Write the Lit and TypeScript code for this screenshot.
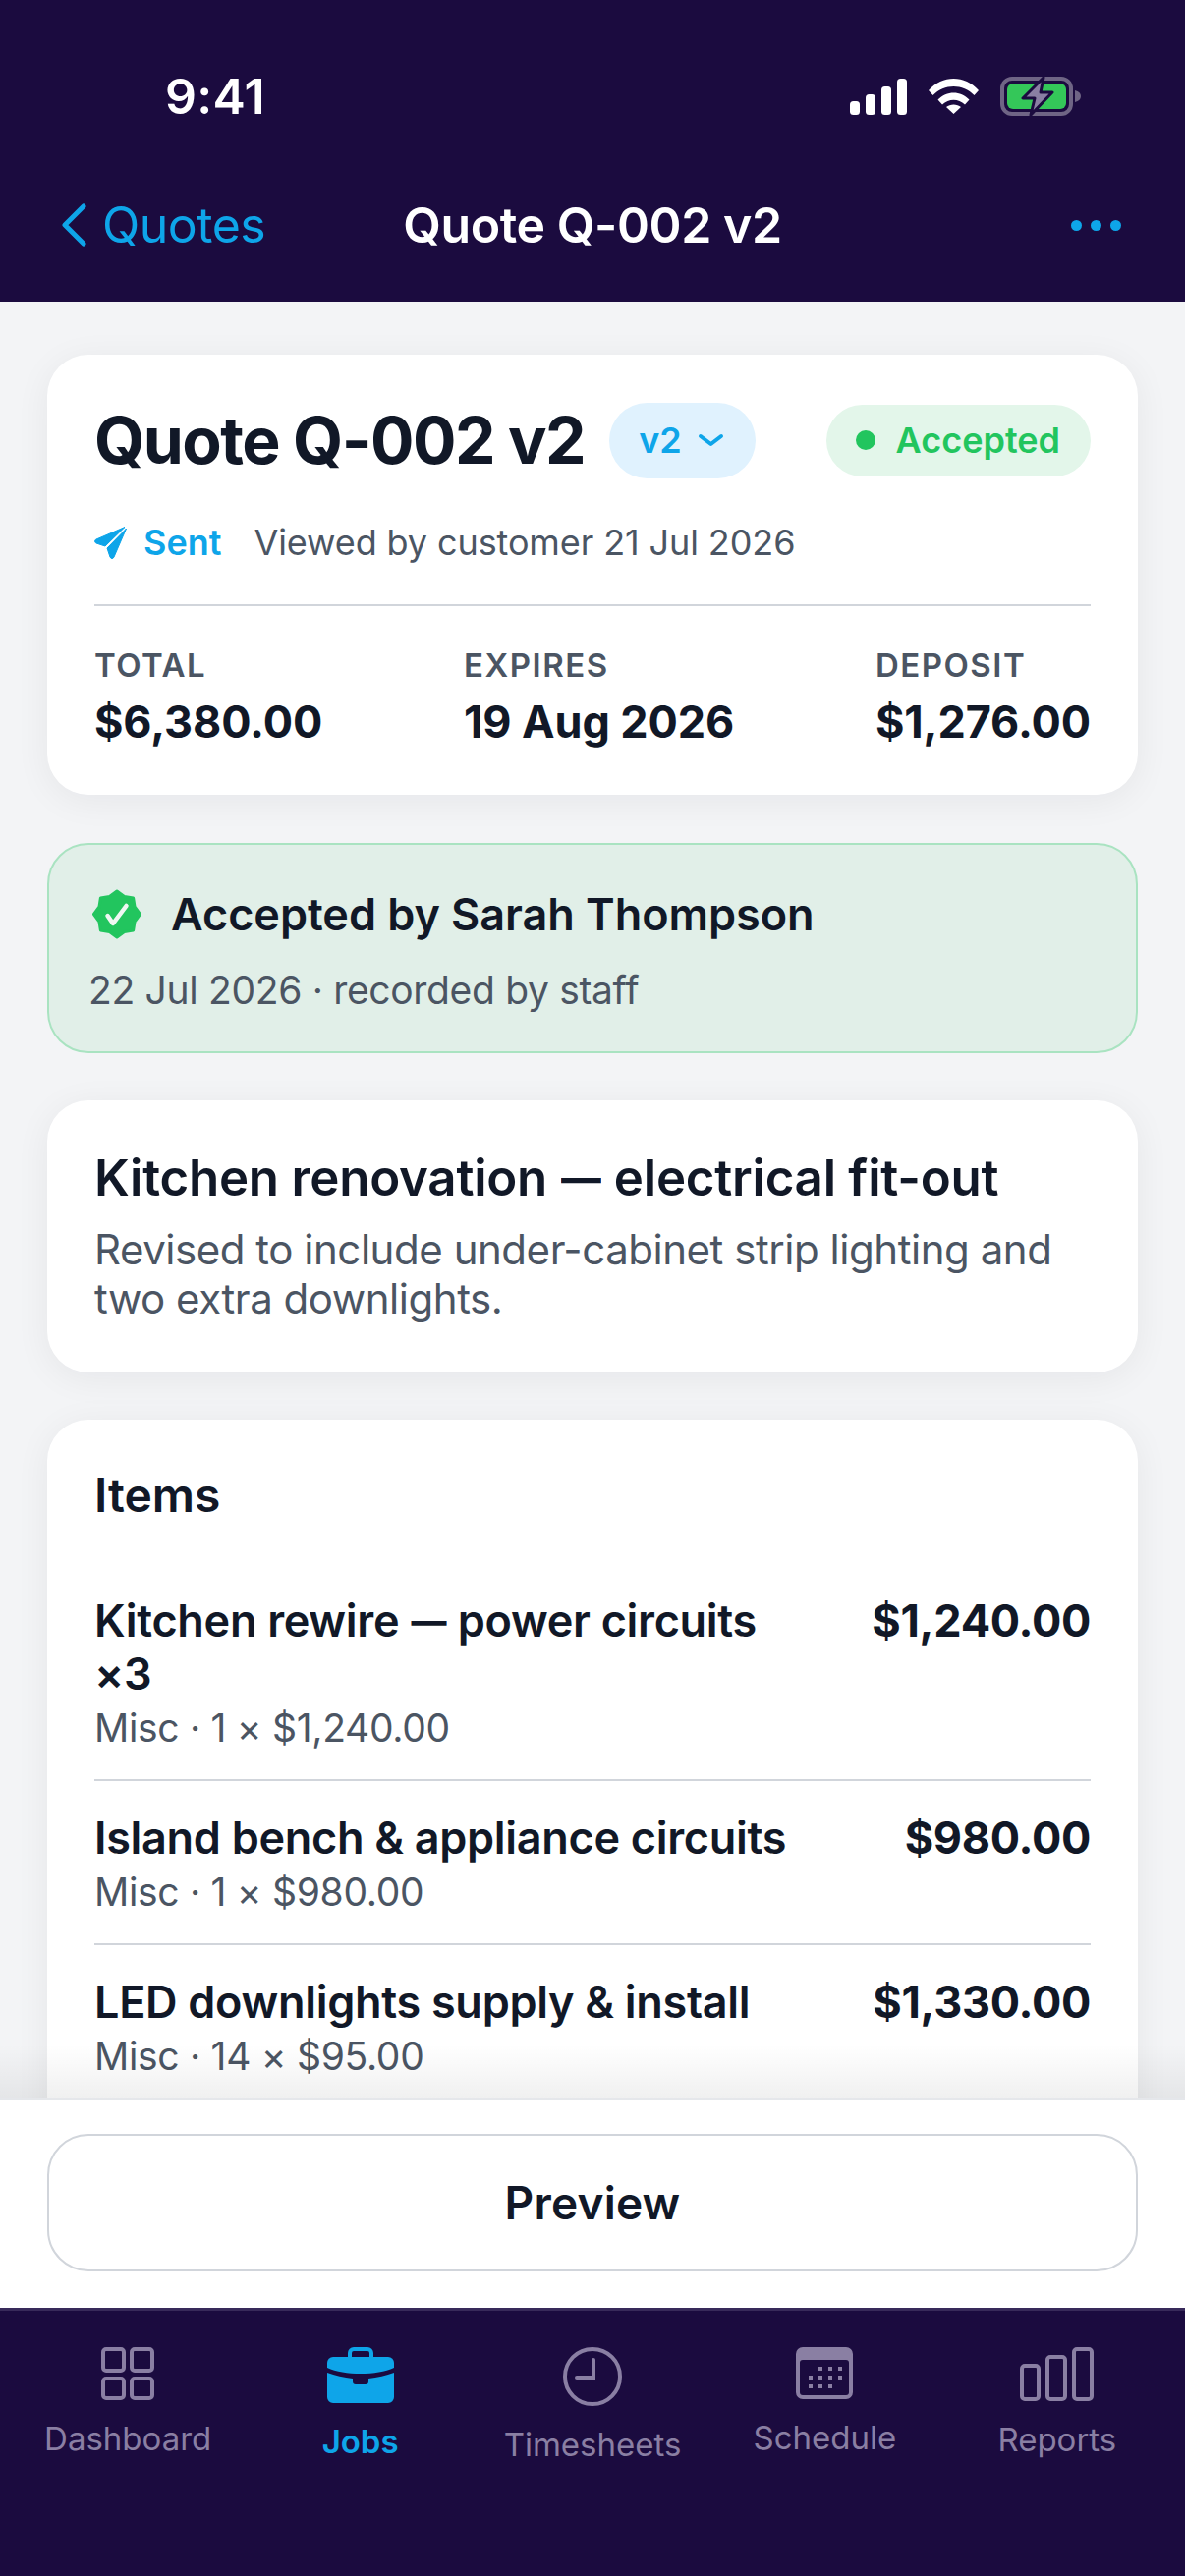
import { LitElement, css, html, svg } from 'lit'
import { customElement } from 'lit/decorators.js'

const dash = html`<span class="dash-gap"> <span class="dash">—</span> </span>`

const items = [
  { name: html`Kitchen rewire${dash}power circuits <span>×3</span>`, meta: 'Misc · 1 × $1,240.00', price: '$1,240.00' },
  { name: 'Island bench & appliance circuits', meta: 'Misc · 1 × $980.00', price: '$980.00' },
  { name: 'LED downlights supply & install', meta: 'Misc · 14 × $95.00', price: '$1,330.00' },
]

const icons = {
  dashboard: html`<svg width="54" height="54" viewBox="0 0 54 54" fill="none" stroke="currentColor" stroke-width="4">
    <rect x="2" y="2" width="21" height="22" rx="3"/><rect x="31" y="2" width="21" height="22" rx="3"/>
    <rect x="2" y="32" width="21" height="20" rx="3"/><rect x="31" y="32" width="21" height="20" rx="3"/>
  </svg>`,
  jobs: html`<svg width="68" height="57" viewBox="0 0 68 57" fill="currentColor">
    <path d="M23 11V6a4 4 0 0 1 4-4h14a4 4 0 0 1 4 4v5" fill="none" stroke="currentColor" stroke-width="4"/>
    <path d="M6 10h56a6 6 0 0 1 6 6v5c-9 4-21 6-34 6S9 25 0 21v-5a6 6 0 0 1 6-6z"/>
    <path d="M0 26c8 3 17 5 26 6v3a3 3 0 0 0 3 3h10a3 3 0 0 0 3-3v-3c9-1 18-3 26-6v25a6 6 0 0 1-6 6H6a6 6 0 0 1-6-6z"/>
  </svg>`,
  timesheets: html`<svg width="60" height="60" viewBox="0 0 60 60" fill="none" stroke="currentColor" stroke-width="4" stroke-linecap="round">
    <circle cx="30" cy="30" r="28"/><path d="M31 13v18H14"/>
  </svg>`,
  schedule: html`<svg width="58" height="53" viewBox="0 0 58 53" fill="currentColor">
    <path fill-rule="evenodd" d="M7 0h44a7 7 0 0 1 7 7v39a7 7 0 0 1-7 7H7a7 7 0 0 1-7-7V7a7 7 0 0 1 7-7zM7 13a3 3 0 0 0-3 3v30a3 3 0 0 0 3 3h44a3 3 0 0 0 3-3V16a3 3 0 0 0-3-3z"/>
    ${[[23, 20], [33, 20], [43, 20], [13, 29], [23, 29], [33, 29], [43, 29], [13, 38], [23, 38], [33, 38]].map(
      ([x, y]) => svg`<rect x=${x} y=${y} width="4" height="4"/>`,
    )}
  </svg>`,
  reports: html`<svg width="75" height="55" viewBox="0 0 75 55" fill="none" stroke="currentColor" stroke-width="4">
    <rect x="2" y="19" width="17" height="34" rx="3"/><rect x="28" y="10" width="18" height="43" rx="3"/><rect x="55" y="2" width="18" height="51" rx="3"/>
  </svg>`,
}

const tabs = [
  { label: 'Dashboard', icon: icons.dashboard },
  { label: 'Jobs', icon: icons.jobs, active: true },
  { label: 'Timesheets', icon: icons.timesheets },
  { label: 'Schedule', icon: icons.schedule },
  { label: 'Reports', icon: icons.reports },
]

@customElement('app-root')
export class AppRoot extends LitElement {
  render() {
    return html`
      <div class="app">
        <header class="top">
          <div class="status">
            <span class="time">9:41</span>
            <div class="status-icons">
              <svg width="58" height="37" viewBox="0 0 58 37" fill="#fff">
                <rect x="0" y="23" width="10" height="14" rx="3.5"/><rect x="16" y="16" width="10" height="21" rx="3.5"/>
                <rect x="32" y="8" width="10" height="29" rx="3.5"/><rect x="48" y="0" width="10" height="37" rx="3.5"/>
              </svg>
              <svg class="wifi" width="51" height="36" viewBox="0 0 51 36" fill="#fff">
                <path d="M0 12C14-4 37-4 51 12l-4.500 5C35 5 16 5 4.500 17z"/>
                <path d="M9.500 21.500c9-9.500 23-9.500 32 0l-4.500 5c-6.500-6.500-16.500-6.500-23 0z"/>
                <path d="M18 29c4-3.500 11-3.500 15 0l-7.500 7z"/>
              </svg>
              <svg class="battery" width="82" height="40" viewBox="0 0 82 40">
                <rect x="2" y="2" width="70" height="36" rx="10" fill="none" stroke="#6f6585" stroke-width="4"/>
                <rect x="7" y="7" width="60" height="26" rx="6" fill="#34c759"/>
                <path d="M76 14c4 1 6 3 6 6s-2 5-6 6z" fill="#6f6585"/>
                <path d="M44 1 23 22h12l-4 17 22-23H41z" fill="#8a7fa3" stroke="#1b0b3f" stroke-width="3" stroke-linejoin="round"/>
              </svg>
            </div>
          </div>
          <nav class="nav">
            <div class="back">
              <svg width="26" height="44" viewBox="0 0 26 44" fill="none" stroke="currentColor" stroke-width="5" stroke-linecap="round" stroke-linejoin="round">
                <path d="M23 3 4 22l19 19"/>
              </svg>
              <span>Quotes</span>
            </div>
            <div class="nav-title">Quote Q-002 v2</div>
            <div class="more"><i></i><i></i><i></i></div>
          </nav>
        </header>

        <main class="content">
          <div class="scroll">
            <section class="card summary">
              <div class="title-row">
                <h1>Quote Q-002 v2</h1>
                <div class="version">
                  v2
                  <svg width="27" height="14" viewBox="0 0 27 14" fill="none" stroke="currentColor" stroke-width="4" stroke-linecap="round" stroke-linejoin="round"><path d="m3 3 10.500 8L24 3"/></svg>
                </div>
                <div class="state"><i></i>Accepted</div>
              </div>
              <div class="sent-row">
                <svg width="33" height="33" viewBox="0 0 33 33" fill="#0ea5e9"><path d="M31 0.500 2 13c-2 1-2 3 0 4l9 3L31 0.500zM32.500 2 13 22l3 9c1 2 3 2 4 0z" stroke="#0ea5e9" stroke-width="1" stroke-linejoin="round"/></svg>
                <span class="sent">Sent</span>
                <span class="viewed">Viewed by customer 21 Jul 2026</span>
              </div>
              <div class="stats">
                <div><label>Total</label><b>$6,380.00</b></div>
                <div><label>Expires</label><b>19 Aug 2026</b></div>
                <div><label>Deposit</label><b>$1,276.00</b></div>
              </div>
            </section>

            <section class="accepted">
              <div class="accepted-head">
                <svg width="50" height="51" viewBox="0 0 50 51">
                  <path fill="#22c55e" stroke="#22c55e" stroke-width="3" stroke-linejoin="round" d="M25 2 32.500 7.500 41.600 8.900 43 18 48.500 25.500 43 33 41.600 42.100 32.500 43.500 25 49 17.500 43.500 8.400 42.100 7 33 1.500 25.500 7 18 8.400 8.900 17.500 7.500z"/>
                  <path fill="none" stroke="#eef7f2" stroke-width="4.500" stroke-linecap="round" stroke-linejoin="round" d="M15.500 27l5.500 8 13.500-18"/>
                </svg>
                <span>Accepted by Sarah Thompson</span>
              </div>
              <div class="accepted-sub">22 Jul 2026 · recorded by staff</div>
            </section>

            <section class="card desc">
              <h2>Kitchen renovation${dash}electrical fit-out</h2>
              <p>Revised to include under-cabinet strip lighting and two extra downlights.</p>
            </section>

            <section class="card list">
              <h3>Items</h3>
              ${items.map(
                (it) => html`
                  <div class="item">
                    <div class="item-main">
                      <div class="item-name">${it.name}</div>
                      <div class="item-meta">${it.meta}</div>
                    </div>
                    <div class="item-price">${it.price}</div>
                  </div>
                `,
              )}
            </section>
          </div>
          <div class="fade"></div>
        </main>

        <div class="footer"><button>Preview</button></div>

        <footer class="tabs">
          ${tabs.map(
            (t) => html`<div class="tab ${t.active ? 'active' : ''}">${t.icon}<span>${t.label}</span></div>`,
          )}
        </footer>
      </div>
    `
  }

  static styles = css`
    :host {
      display: block;
      font-family: Inter, 'Liberation Sans', sans-serif;
      color: #111827;
    }
    .app {
      width: 1206px;
      height: 2622px;
      display: flex;
      flex-direction: column;
      overflow: hidden;
      background: #f3f4f6;
    }
    .dash-gap {
      word-spacing: -0.08em;
    }
    .dash {
      display: inline-block;
      transform: scaleX(0.8);
    }

    .top {
      height: 307px;
      flex: none;
      background: #1b0b3f;
      color: #fff;
      box-sizing: border-box;
      padding-top: 78px;
    }
    .status {
      display: flex;
      justify-content: space-between;
      align-items: center;
      height: 40px;
      padding: 0 106px 0 168px;
    }
    .time {
      font-size: 50px;
      font-weight: 600;
      letter-spacing: 0.3px;
    }
    .status-icons {
      display: flex;
      align-items: center;
    }
    .wifi {
      margin-left: 22px;
    }
    .battery {
      margin-left: 22px;
    }
    .nav {
      display: flex;
      align-items: center;
      justify-content: space-between;
      height: 60px;
      margin-top: 81px;
      padding: 0 65px 0 62px;
      position: relative;
    }
    .back {
      display: flex;
      align-items: center;
      gap: 16px;
      color: #0ea5e9;
      font-size: 50px;
      letter-spacing: -0.5px;
    }
    .nav-title {
      position: absolute;
      left: 0;
      right: 0;
      text-align: center;
      font-size: 50px;
      font-weight: 600;
      letter-spacing: -0.4px;
    }
    .more {
      display: flex;
      gap: 9px;
    }
    .more i {
      width: 11px;
      height: 11px;
      border-radius: 50%;
      background: #0ea5e9;
    }

    .content {
      flex: 1;
      min-height: 0;
      position: relative;
      overflow: hidden;
    }
    .scroll {
      display: flex;
      flex-direction: column;
      gap: 48px;
      padding: 54px 48px 0;
    }
    .card {
      background: #fff;
      border-radius: 42px;
      box-shadow: 0 6px 36px rgba(17, 24, 39, 0.06);
      padding: 48px;
    }
    .fade {
      position: absolute;
      left: 0;
      right: 0;
      bottom: 0;
      height: 54px;
      background: linear-gradient(rgba(0, 0, 0, 0), rgba(0, 0, 0, 0.06));
    }

    .summary {
      height: 448px;
      box-sizing: border-box;
      padding-top: 48px;
    }
    .title-row {
      display: flex;
      align-items: center;
      height: 78px;
    }
    h1 {
      margin: 0;
      font-size: 66px;
      font-weight: 700;
      letter-spacing: -1.55px;
    }
    .version {
      display: flex;
      align-items: center;
      gap: 16px;
      height: 77px;
      box-sizing: border-box;
      padding: 0 32px 0 30px;
      margin-left: 25px;
      border-radius: 39px;
      background: #e0f2fe;
      color: #0ea5e9;
      font-size: 36px;
      font-weight: 600;
    }
    .state {
      display: flex;
      align-items: center;
      gap: 21px;
      height: 73px;
      box-sizing: border-box;
      padding: 0 31px 0 30px;
      margin-left: auto;
      border-radius: 37px;
      background: #e3f6ea;
      color: #22c55e;
      font-size: 36px;
      font-weight: 600;
    }
    .state i {
      width: 20px;
      height: 20px;
      border-radius: 50%;
      background: #22c55e;
    }
    .sent-row {
      display: flex;
      align-items: center;
      height: 50px;
      margin-top: 40px;
      padding-bottom: 38px;
      border-bottom: 2px solid #d1d5db;
    }
    .sent {
      margin-left: 17px;
      color: #0ea5e9;
      font-size: 36px;
      font-weight: 600;
    }
    .viewed {
      margin-left: 33px;
      color: #4b5563;
      font-size: 36px;
      letter-spacing: -0.1px;
    }
    .stats {
      display: flex;
      justify-content: space-between;
      margin-top: 40px;
    }
    .stats label {
      display: block;
      color: #4b5563;
      font-size: 33px;
      font-weight: 600;
      letter-spacing: 1.5px;
      line-height: 40px;
      text-transform: uppercase;
    }
    .stats b {
      display: block;
      margin-top: 11px;
      font-size: 45px;
      font-weight: 700;
      letter-spacing: -0.1px;
      line-height: 54px;
    }

    .accepted {
      height: 214px;
      box-sizing: border-box;
      padding: 43px 40px 0;
      margin-top: 1px;
      background: #e1efe8;
      border: 2px solid #a9e3c1;
      border-radius: 42px;
    }
    .accepted-head {
      display: flex;
      align-items: center;
      gap: 30px;
      padding-left: 4px;
      font-size: 45px;
      font-weight: 600;
      letter-spacing: -0.05px;
    }
    .accepted-sub {
      margin-top: 26px;
      color: #4b5563;
      font-size: 39px;
      letter-spacing: -0.33px;
    }

    .desc {
      height: 277px;
      box-sizing: border-box;
    }
    h2 {
      margin: 0;
      font-size: 51px;
      font-weight: 600;
      letter-spacing: -0.24px;
      line-height: 62px;
    }
    .desc p {
      margin: 17px 0 0;
      color: #4b5563;
      font-size: 42px;
      letter-spacing: -0.46px;
      line-height: 50px;
    }

    h3 {
      margin: 0 0 41px;
      font-size: 48px;
      font-weight: 600;
      line-height: 58px;
    }
    .item {
      display: flex;
      justify-content: space-between;
      gap: 60px;
      padding: 31px 0 29px;
      border-bottom: 2px solid #d1d5db;
    }
    .item:last-child {
      border-bottom: none;
    }
    .item-main {
      min-width: 0;
    }
    .item-name {
      font-size: 45px;
      font-weight: 600;
      letter-spacing: -0.3px;
      line-height: 54px;
    }
    .item-meta {
      margin-top: 4px;
      color: #4b5563;
      font-size: 39px;
      letter-spacing: -0.3px;
      line-height: 47px;
    }
    .item-price {
      flex: none;
      font-size: 45px;
      font-weight: 700;
      letter-spacing: -0.3px;
      line-height: 54px;
    }

    .footer {
      flex: none;
      height: 214px;
      box-sizing: border-box;
      padding: 34px 48px 0;
      background: #fff;
      border-top: 3px solid #e5e7eb;
    }
    button {
      display: block;
      width: 100%;
      height: 140px;
      background: #fff;
      border: 2px solid #d1d5db;
      border-radius: 42px;
      color: #111827;
      font-family: inherit;
      font-size: 46px;
      font-weight: 600;
      letter-spacing: 0.2px;
    }

    .tabs {
      flex: none;
      height: 273px;
      box-sizing: border-box;
      display: flex;
      padding: 37px 12px 0;
      background: #1b0b3f;
      border-top: 3px solid #382a5a;
    }
    .tab {
      flex: 1;
      display: flex;
      flex-direction: column;
      align-items: center;
      color: #8a7fa3;
    }
    .tab span {
      margin-top: 19px;
      font-size: 33px;
      line-height: 40px;
    }
    .tab.active {
      color: #0ea5e9;
    }
    .tab.active span {
      font-weight: 600;
    }
  `
}

declare global {
  interface HTMLElementTagNameMap {
    'app-root': AppRoot
  }
}
